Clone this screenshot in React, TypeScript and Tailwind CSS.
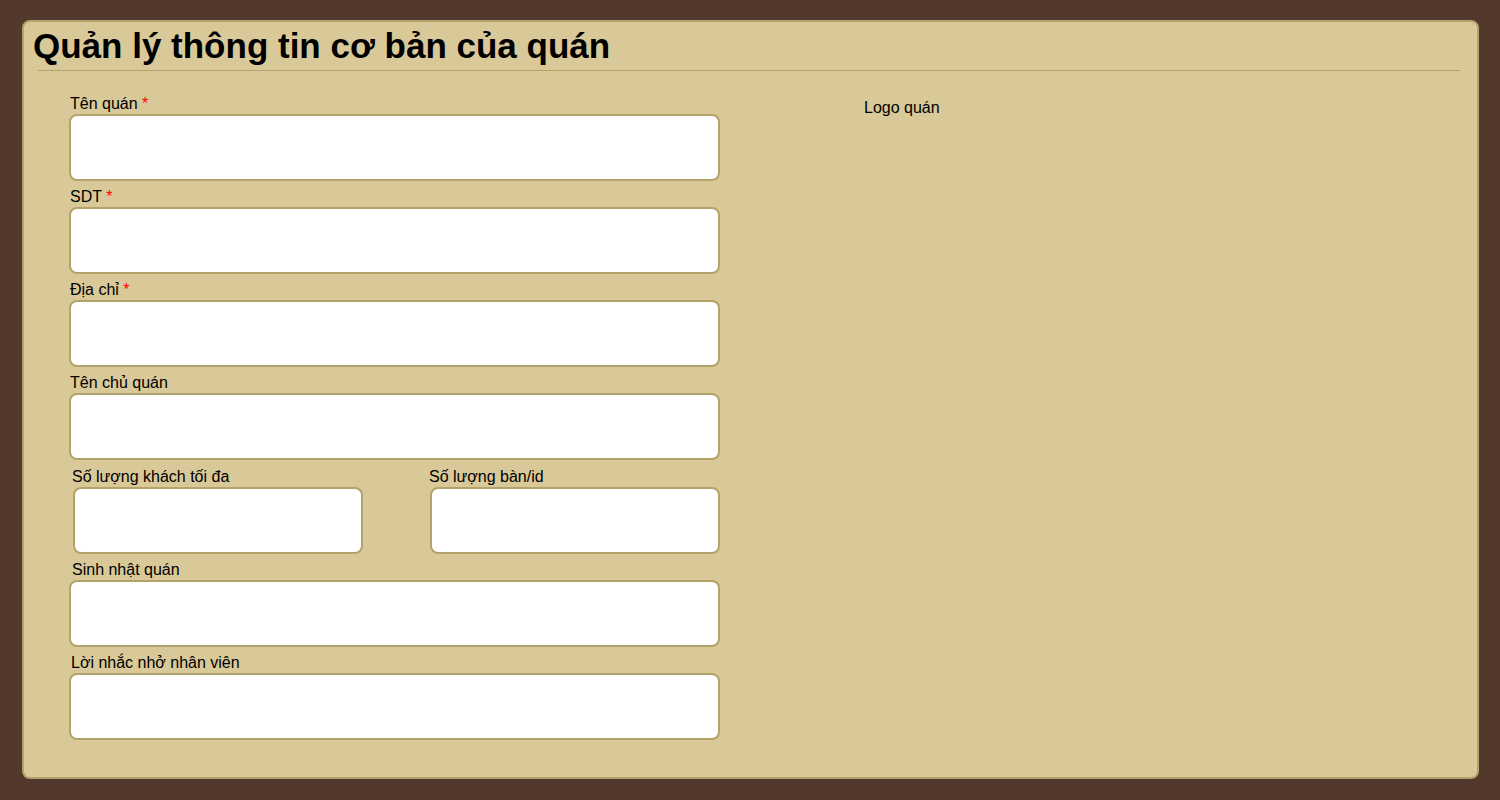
const fields = [
  { label: "Tên quán", required: true },
  { label: "SDT", required: true },
  { label: "Địa chỉ", required: true },
  { label: "Tên chủ quán", required: false },
];

function Field({
  label,
  required,
  className = "",
  labelClass = "ml-px",
}: {
  label: string;
  required?: boolean;
  className?: string;
  labelClass?: string;
}) {
  return (
    <div className={`flex flex-col mb-[7px] ${className}`}>
      <label className={`leading-[18px] h-[18px] mb-px text-[16px] text-black ${labelClass}`}>
        {label}
        {required && <span className="text-[#ff0000]"> *</span>}
      </label>
      <input
        type="text"
        className="h-[67px] w-full rounded-[8px] border-2 border-[#b3a36b] bg-white px-2 outline-none"
      />
    </div>
  );
}

export default function App() {
  return (
    <div
      className="h-[800px] w-[1500px] bg-[#53382d] pt-5 pl-[22px]"
      style={{ fontFamily: '"Liberation Sans", Arial, sans-serif' }}
    >
      <div className="w-[1457px] h-[759px] rounded-[8px] border-2 border-[#b3a36b] bg-[#d9c998]">
        <h1 className="pl-[9px] pt-[4px] text-[35px] font-bold leading-[40px] text-black">
          Quản lý thông tin cơ bản của quán
        </h1>
        <div className="mt-[4px] ml-[14px] mr-[17px] h-px bg-[#b3a36b]" />
        <div className="flex pt-[24px]">
          <div className="ml-[45px] w-[651px]">
            {fields.map((f) => (
              <Field key={f.label} label={f.label} required={f.required} />
            ))}
            <div className="flex justify-between pt-px">
              <Field label="Số lượng khách tối đa" className="w-[290px] ml-[4px]" labelClass="-ml-px" />
              <Field label="Số lượng bàn/id" className="w-[290px]" labelClass="-ml-px" />
            </div>
            <Field label="Sinh nhật quán" labelClass="ml-[3px]" />
            <Field label="Lời nhắc nhở nhân viên" labelClass="ml-[2px]" />
          </div>
          <div className="ml-[144px] pt-[4px] text-[16px] leading-[18px] text-black">Logo quán</div>
        </div>
      </div>
    </div>
  );
}
